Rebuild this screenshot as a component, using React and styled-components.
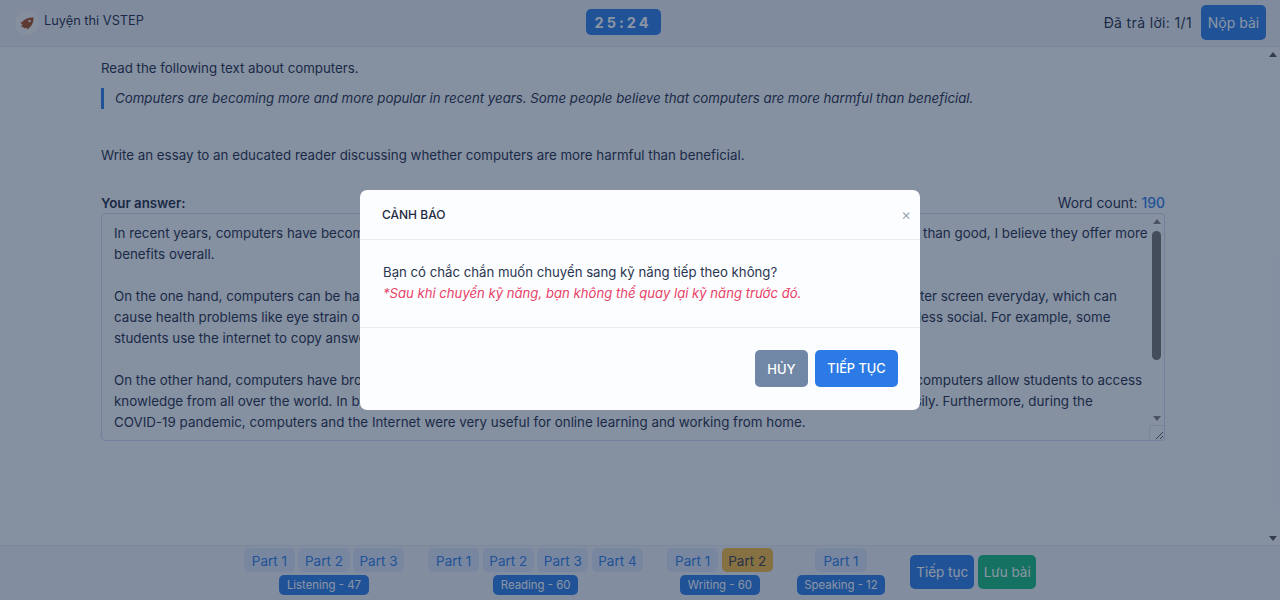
import React from 'react';
import styled, { createGlobalStyle } from 'styled-components';

const font = `"Inter", "Noto Sans", sans-serif`;

const Global = createGlobalStyle`
  html, body { margin: 0; height: 100%; overflow: hidden; }
  body { font-family: ${font}; background: #fff; color: #1f2a44; }
  #root { height: 100%; }
`;

const Page = styled.div`
  height: 600px; display: flex; flex-direction: column; background: #f4f7fb; position: relative;
`;
const Header = styled.header`
  height: 47px; flex: none; display: flex; justify-content: space-between; align-items: flex-start;
  padding: 5px 14px 0 15px; background: #eaeff5; border-bottom: 1px solid #dfe5ee; box-sizing: border-box;
`;
const Brand = styled.div`display: flex; align-items: flex-start; gap: 5px; width: 127px; margin-top: 6px; font-size: 12.8px; line-height: 19px; white-space: nowrap;`;
const BrandIcon = styled.span`
  width: 24px; height: 24px; border-radius: 50%; background: #f5f5f5; display: flex; align-items: center; justify-content: center; flex: none;
`;
const Timer = styled.div`
  width: 75px; height: 26px; border-radius: 5px; background: #2b7ae6; color: #fff; margin-top: 4px;
  display: flex; align-items: center; justify-content: center;
  font-weight: 700; font-size: 14.5px; letter-spacing: 3px;
`;
const HeaderRight = styled.div`display: flex; align-items: center; justify-content: flex-end; gap: 9px; font-size: 14px; letter-spacing: 0.35px; width: 162px; white-space: nowrap;`;
const Btn = styled.button`
  border: none; border-radius: 5px; font-family: ${font}; font-size: ${p => p.$fs || 14}px; color: #fff;
  background: ${p => p.$bg || '#2b7ae6'}; padding: 0; height: ${p => p.$h || 34}px; width: ${p => p.$w}px; font-weight: ${p => p.$fw || 400}; flex: none;
`;
const Main = styled.main`flex: 1; min-height: 0; position: relative; padding: 12px 115px 0 101px;`;
const Para = styled.p`margin: 0; font-size: 13.3px; line-height: 18px; white-space: nowrap;`;
const Quote = styled.blockquote`
  margin: 11px 0 0; padding: 0 0 0 11px; border-left: 3px solid #2b7ae6; font-style: italic; font-size: 13.27px; line-height: 21px; white-space: nowrap;
`;
const Prompt = styled(Para)`margin-top: 37px;`;
const AnswerHead = styled.div`
  display: flex; justify-content: space-between; margin-top: 30px; font-size: 13.3px; line-height: 18px;
  & b { font-weight: 600; }
  & span { font-size: 13.9px; }
  & em { font-style: normal; color: #2b7ae6; font-weight: 500; }
`;
const AreaWrap = styled.div`position: relative; margin-top: 1px; height: 228px; width: 1064px;`;
const Area = styled.textarea`
  width: 100%; height: 100%; box-sizing: border-box; display: block; resize: none; overflow: hidden;
  border: 1px solid #cdd8ec; border-radius: 4px; background: #f4f7fb; padding: 9px 12px 0;
  font-family: ${font}; font-size: 13.36px; line-height: 21px; color: #1f2a44; white-space: pre; outline: none;
`;
const ScrollTrack = styled.div`
  position: absolute; top: ${p => p.$top}px; right: ${p => p.$right}px; bottom: ${p => p.$bottom}px; width: 15px;
  display: flex; flex-direction: column; align-items: center; justify-content: space-between;
`;
const Arrow = styled.i`
  width: 0; height: 0; border-left: 4px solid transparent; border-right: 4px solid transparent; margin: 5px 0 4px;
  ${p => p.$down ? `border-top: 5px solid ${p.$c};` : `border-bottom: 5px solid ${p.$c};`}
`;
const Thumb = styled.div`
  position: absolute; top: 17px; left: 3px; width: 9px; height: 129px; border-radius: 4.5px; background: #6f6f6f;
`;
const Resizer = styled.svg`position: absolute; right: 1px; bottom: 1px; border-left: 1px solid #dde3ec; border-top: 1px solid #dde3ec;`;
const Footer = styled.footer`
  height: 55px; flex: none; box-sizing: border-box; background: #eef2f7; border-top: 1px solid #e3e8f0;
  display: flex; justify-content: center; align-items: flex-start; gap: 24px; padding: 2px 0 0;
`;
const Skill = styled.div`display: flex; flex-direction: column; align-items: center; gap: 3px;`;
const Parts = styled.div`display: flex; gap: 3.4px;`;
const Part = styled.span`
  height: 24px; width: 51.2px; border-radius: 5px; display: flex; align-items: center; justify-content: center; font-size: 13.5px; padding-top: 1px; box-sizing: border-box;
  background: ${p => p.$on ? '#f5b83d' : '#dbe5f6'}; color: ${p => p.$on ? '#3a3a4a' : '#2b7ae6'};
`;
const SkillTag = styled.span`
  height: 20px; padding: 0 7.5px; border-radius: 5px; display: flex; align-items: center; background: #2b7ae6; color: #fff; font-size: 11.4px;
`;
const FootActions = styled.div`display: flex; gap: 4px; margin: 7px 0 0 1px;`;
const Backdrop = styled.div`
  position: absolute; inset: 0; background: rgba(21, 42, 72, 0.5);
`;
const ModalBox = styled.div`
  position: absolute; left: 360px; top: 190px; width: 560px; height: 220px; background: #fcfdfe; border-radius: 7px;
  display: flex; flex-direction: column; box-sizing: border-box;
`;
const ModalHead = styled.div`
  height: 50px; flex: none; box-sizing: border-box; border-bottom: 1px solid #e8edf4; display: flex; align-items: center; justify-content: space-between;
  padding: 0 9px 0 22px; font-size: 12px; font-weight: 500; color: #1f2a44;
`;
const Close = styled.span`color: #8a94a6; font-size: 15px; font-weight: 300;`;
const ModalBody = styled.div`
  height: 88px; flex: none; box-sizing: border-box; border-bottom: 1px solid #e8edf4; padding: 22px 22px 0 23px; font-size: 13.2px; line-height: 21px; color: #2a3550;
`;
const Warn = styled.div`color: #e8426a; font-style: italic; font-size: 13.13px;`;
const ModalFoot = styled.div`display: flex; justify-content: flex-end; gap: 7px; padding: 22px 22px 0;`;

const answer = `In recent years, computers have become an essential part of our own lives. Although many people think that they do more harm than good, I believe they offer more
benefits overall.

On the one hand, computers can be harmful to our health  and social life. Many people spend too much time in front of a computer screen everyday, which can
cause health problems like eye strain or back pain. Moreover, people who spend too long on their computers may also become less social. For example, some
students use the internet to copy answers instead of studying by themselves.

On the other hand, computers have brought many great benefits to our education and work too. For example, in many schools, computers allow students to access
knowledge from all over the world. In business, they also help people to work faster and communicate with each other more easily. Furthermore, during the
COVID-19 pandemic, computers and the Internet were very useful for online learning and working from home.`;

function RocketIcon() {
  return (
    <svg width="14" height="13" viewBox="0 0 14 13">
      <path d="M2.5 4.5 C4.5 2 9 0 13.5 0.5 C13.8 5 11.5 9.5 9 11 L8 12.5 L6 10.5 L4.5 11.5 L3 10 L1 9.5 L2.5 7.5 L0.5 6 Z" fill="#a84a1c" />
      <circle cx="9.5" cy="4" r="1.2" fill="#f5f5f5" />
    </svg>
  );
}

const skills = [
  { name: 'Listening - 47', parts: ['Part 1', 'Part 2', 'Part 3'] },
  { name: 'Reading - 60', parts: ['Part 1', 'Part 2', 'Part 3', 'Part 4'] },
  { name: 'Writing - 60', parts: ['Part 1', 'Part 2'], active: 1 },
  { name: 'Speaking - 12', parts: ['Part 1'] },
];

export default function App() {
  return (
    <Page>
      <Global />
      <Header>
        <Brand><BrandIcon><RocketIcon /></BrandIcon>Luyện thi VSTEP</Brand>
        <Timer>25:24</Timer>
        <HeaderRight>
          <span>Đã trả lời: 1/1</span>
          <Btn $w={65} $h={35}>Nộp bài</Btn>
        </HeaderRight>
      </Header>
      <Main>
        <Para>Read the following text about computers.</Para>
        <Quote>Computers are becoming more and more popular in recent years. Some people believe that computers are more harmful than beneficial.</Quote>
        <Prompt>Write an essay to an educated reader discussing whether computers are more harmful than beneficial.</Prompt>
        <AnswerHead><b>Your answer:</b><span>Word count: <em>190</em></span></AnswerHead>
        <AreaWrap>
          <Area readOnly value={answer} />
          <ScrollTrack $top={1} $right={1} $bottom={16}>
            <Arrow $c="#7a7a7a" />
            <Thumb />
            <Arrow $down $c="#7a7a7a" />
          </ScrollTrack>
          <Resizer width="14" height="14" viewBox="0 0 14 14">
            <path d="M13 6 L6 13 M13 10 L10 13" stroke="#505050" strokeWidth="1" />
          </Resizer>
        </AreaWrap>
        <ScrollTrack $top={0} $right={0} $bottom={0}>
          <Arrow $c="#505050" />
          <Arrow $down $c="#505050" />
        </ScrollTrack>
      </Main>
      <Footer>
        {skills.map(s => (
          <Skill key={s.name}>
            <Parts>
              {s.parts.map((p, i) => <Part key={p} $on={s.active === i}>{p}</Part>)}
            </Parts>
            <SkillTag>{s.name}</SkillTag>
          </Skill>
        ))}
        <FootActions>
          <Btn $w={64} $fs={13.5}>Tiếp tục</Btn>
          <Btn $w={58} $fs={13.5} $bg="#14b87d">Lưu bài</Btn>
        </FootActions>
      </Footer>
      <Backdrop />
      <ModalBox>
        <ModalHead>CẢNH BÁO<Close>×</Close></ModalHead>
        <ModalBody>
          Bạn có chắc chắn muốn chuyển sang kỹ năng tiếp theo không?
          <Warn>*Sau khi chuyển kỹ năng, bạn không thể quay lại kỹ năng trước đó.</Warn>
        </ModalBody>
        <ModalFoot>
          <Btn $w={53} $h={37} $fs={13} $bg="#7087a6" $fw={500}>HỦY</Btn>
          <Btn $w={83} $h={37} $fs={12.8} $fw={500}>TIẾP TỤC</Btn>
        </ModalFoot>
      </ModalBox>
    </Page>
  );
}
